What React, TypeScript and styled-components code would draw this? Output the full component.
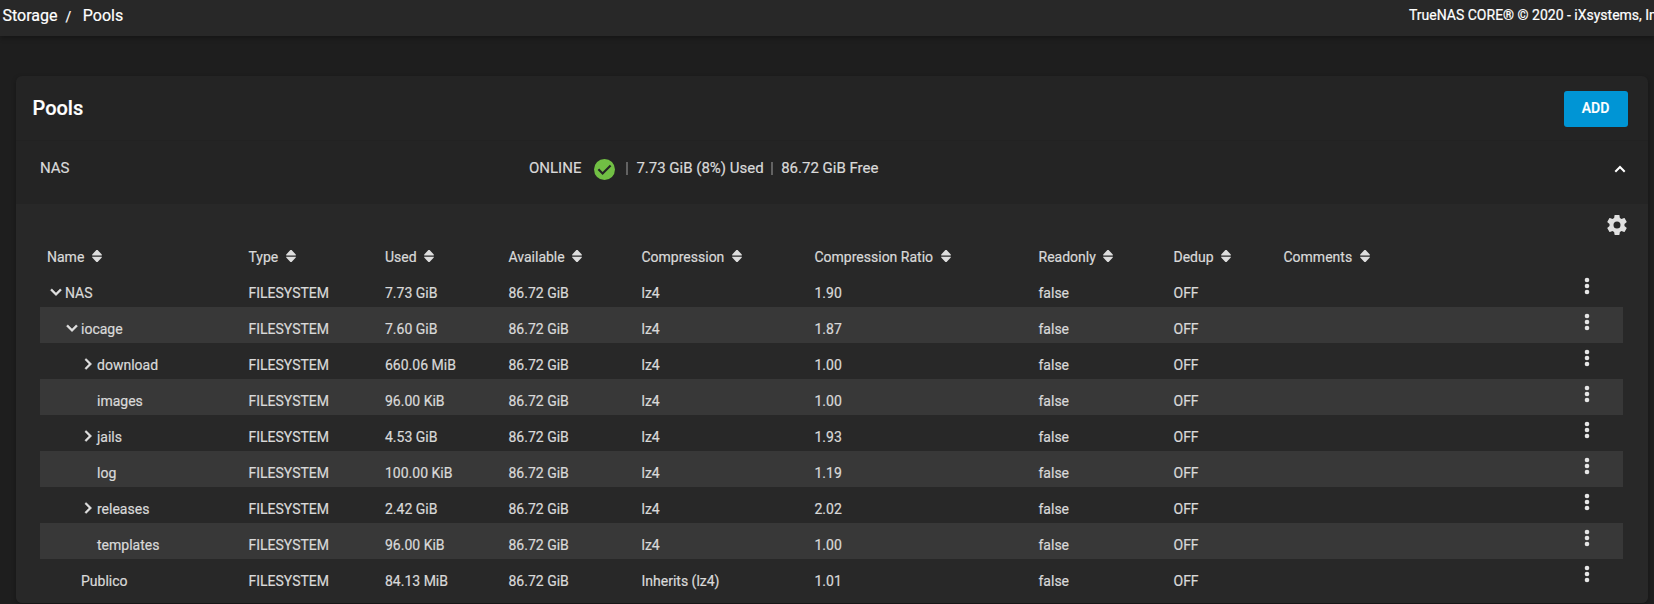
import React from 'react';
import styled, { createGlobalStyle } from 'styled-components';

const Global = createGlobalStyle`
  * { box-sizing: border-box; }
  html, body { margin: 0; background: #1e1e1e; overflow: hidden; }
  body {
    font-family: Roboto, "Liberation Sans", sans-serif;
    font-size: 14px;
    color: #d9d9d9;
    -webkit-text-stroke: 0.2px currentColor;
  }
`;

const Page = styled.div`
  height: 604px;
  overflow: hidden;
  display: flex;
  flex-direction: column;
`;

const Topbar = styled.header`
  flex: none;
  height: 36px;
  padding: 0 0 5px 2.5px;
  display: flex;
  align-items: center;
  background: #282828;
  color: #fff;
  box-shadow: 0 2px 5px rgba(0, 0, 0, 0.3);
`;

const Crumb = styled.span`
  font-size: 16px;
  line-height: 20px;
`;

const Slash = styled.span`
  font-size: 14px;
  margin: 2px 11.5px 0 8px;
`;

const Copyright = styled.span`
  flex: none;
  width: 245px;
  margin-left: auto;
  padding-bottom: 1px;
  font-size: 14px;
  white-space: nowrap;
`;

const Card = styled.main`
  flex: none;
  margin: 40px 6px 0 16px;
  height: 527px;
  border-radius: 6px;
  background: #242424;
  overflow: hidden;
  box-shadow: 0 2px 5px rgba(0, 0, 0, 0.3);
`;

const CardHeader = styled.div`
  height: 64px;
  padding: 1px 20px 0 16.5px;
  display: flex;
  align-items: center;
  justify-content: space-between;
`;

const Title = styled.h1`
  margin: 0;
  padding-bottom: 2px;
  font-size: 20px;
  font-weight: 500;
  color: #fff;
`;

const AddButton = styled.button`
  width: 64px;
  height: 36px;
  padding: 0 1px 2px 0;
  border: 0;
  border-radius: 3px;
  background: #0095d5;
  color: #fff;
  font: 500 14px Roboto, sans-serif;
`;

const PoolSummary = styled.div`
  height: 64px;
  padding: 0 22px 8px 24px;
  border-top: 1px solid #222;
  display: flex;
  align-items: center;
  font-size: 15px;
`;

const PoolName = styled.span`
  width: 489px;
  padding-bottom: 2px;
`;

const Status = styled.div`
  flex: 1;
  display: flex;
  align-items: center;
  white-space: nowrap;
  span { padding-bottom: 2px; }
  svg { margin: 2px 11px 0 13px; }
`;

const Divider = styled.i`
  width: 2px;
  height: 13px;
  margin: 0 8px 0 0;
  background: #626262;
`;

const Panel = styled.section`
  height: 400px;
  padding: 11px 25px 0 24px;
  background: #282828;
`;

const Toolbar = styled.div`
  height: 20px;
  margin-right: -4px;
  display: flex;
  justify-content: flex-end;
`;

const Row = styled.div<{ $striped?: boolean }>`
  height: 36px;
  padding: 8px 27.5px 0 7px;
  display: grid;
  grid-template-columns: 201.5px 136.5px 123.5px 133px 173px 224px 135px 110px 1fr 18px;
  line-height: 28px;
  background: ${p => (p.$striped ? '#383838' : 'transparent')};
`;

const Cell = styled.span`
  white-space: nowrap;
  display: flex;
`;

const Label = styled.span`
  margin-right: 7.5px;
`;

const NameCell = styled(Cell)<{ $level: number }>`
  padding-left: ${p => p.$level * 16}px;
`;

const Toggle = styled.span`
  width: 18px;
  height: 28px;
  display: flex;
  align-items: center;
  justify-content: center;
  svg { flex: none; margin-top: -2px; }
`;

const SortIcon = () => (
  <svg width="10" height="28" viewBox="0 0 10 28" fill="#dedede">
    <path d="M0.2 12.4V11.6L4.4 7H5.6L9.8 11.6V12.4Z M0.2 13.7H9.8V14.5L5.6 19H4.4L0.2 14.5Z" />
  </svg>
);

const Chevron = ({ open }: { open: boolean }) => (
  <svg width="22" height="22" viewBox="0 0 24 24" fill="#e0e0e0" stroke="#e0e0e0" strokeWidth="0.5">
    <path d={open
      ? 'M7.41,8.58L12,13.17L16.59,8.58L18,10L12,16L6,10L7.41,8.58Z'
      : 'M8.59,16.58L13.17,12L8.59,7.41L10,6L16,12L10,18L8.59,16.58Z'} />
  </svg>
);

const MenuButton = styled.button`
  width: 18px;
  height: 20px;
  padding: 0;
  margin-top: -2px;
  border: 0;
  background: none;
  display: flex;
  align-items: flex-start;
  justify-content: center;
`;

const DotsIcon = () => (
  <svg width="6" height="18" viewBox="0 0 6 18" fill="#e6e6e6">
    <circle cx="3" cy="3" r="2.3" /><circle cx="3" cy="9" r="2.3" /><circle cx="3" cy="15" r="2.3" />
  </svg>
);

const columns = ['Name', 'Type', 'Used', 'Available', 'Compression', 'Compression Ratio', 'Readonly', 'Dedup', 'Comments'];

type Dataset = { name: string; level: number; open?: boolean; used: string; compression?: string; ratio: string };
const datasets: Dataset[] = [
  { name: 'NAS', level: 0, open: true, used: '7.73 GiB', ratio: '1.90' },
  { name: 'iocage', level: 1, open: true, used: '7.60 GiB', ratio: '1.87' },
  { name: 'download', level: 2, open: false, used: '660.06 MiB', ratio: '1.00' },
  { name: 'images', level: 2, used: '96.00 KiB', ratio: '1.00' },
  { name: 'jails', level: 2, open: false, used: '4.53 GiB', ratio: '1.93' },
  { name: 'log', level: 2, used: '100.00 KiB', ratio: '1.19' },
  { name: 'releases', level: 2, open: false, used: '2.42 GiB', ratio: '2.02' },
  { name: 'templates', level: 2, used: '96.00 KiB', ratio: '1.00' },
  { name: 'Publico', level: 1, used: '84.13 MiB', compression: 'Inherits (lz4)', ratio: '1.01' },
];

export default function App() {
  return (
    <Page>
      <Global />
      <Topbar>
        <Crumb>Storage</Crumb>
        <Slash>/</Slash>
        <Crumb>Pools</Crumb>
        <Copyright>TrueNAS CORE® © 2020 - iXsystems, Inc.</Copyright>
      </Topbar>
      <Card>
        <CardHeader>
          <Title>Pools</Title>
          <AddButton>ADD</AddButton>
        </CardHeader>
        <PoolSummary>
          <PoolName>NAS</PoolName>
          <Status>
            <span>ONLINE</span>
            <svg width="21" height="21" viewBox="2 2 20 20">
              <circle cx="12" cy="12" r="10" fill="#71bf44" />
              <path d="M6.2 11.8l4 4 7.6-7.6" fill="none" stroke="#242424" strokeWidth="2" />
            </svg>
            <Divider />
            <Label>7.73 GiB (8%) Used</Label>
            <Divider />
            <span>86.72 GiB Free</span>
          </Status>
          <svg width="12" height="8" viewBox="0 0 12 8">
            <path d="M1.3 6.7L6 2l4.7 4.7" fill="none" stroke="#fff" strokeWidth="2" />
          </svg>
        </PoolSummary>
        <Panel>
          <Toolbar>
            <svg width="20" height="20" viewBox="2 2 20 20" fill="#e0e0e0">
              <path d="M12,15.5A3.5,3.5 0 0,1 8.5,12A3.5,3.5 0 0,1 12,8.5A3.5,3.5 0 0,1 15.5,12A3.5,3.5 0 0,1 12,15.5M19.43,12.97C19.47,12.65 19.5,12.33 19.5,12C19.5,11.67 19.47,11.34 19.43,11L21.54,9.37C21.73,9.22 21.78,8.95 21.66,8.73L19.66,5.27C19.54,5.05 19.27,4.96 19.05,5.05L16.56,6.05C16.04,5.66 15.5,5.32 14.87,5.07L14.5,2.42C14.46,2.18 14.25,2 14,2H10C9.75,2 9.54,2.18 9.5,2.42L9.13,5.07C8.5,5.32 7.96,5.66 7.44,6.05L4.95,5.05C4.73,4.96 4.46,5.05 4.34,5.27L2.34,8.73C2.21,8.95 2.27,9.22 2.46,9.37L4.57,11C4.53,11.34 4.5,11.67 4.5,12C4.5,12.33 4.53,12.65 4.57,12.97L2.46,14.63C2.27,14.78 2.21,15.05 2.34,15.27L4.34,18.73C4.46,18.95 4.73,19.03 4.95,18.95L7.44,17.94C7.96,18.34 8.5,18.68 9.13,18.93L9.5,21.58C9.54,21.82 9.75,22 10,22H14C14.25,22 14.46,21.82 14.5,21.58L14.87,18.93C15.5,18.67 16.04,18.34 16.56,17.94L19.05,18.95C19.27,19.03 19.54,18.95 19.66,18.73L21.66,15.27C21.78,15.05 21.73,14.78 21.54,14.63L19.43,12.97Z" />
            </svg>
          </Toolbar>
          <Row>
            {columns.map(c => <Cell key={c}><Label>{c}</Label><SortIcon /></Cell>)}
          </Row>
          {datasets.map((d, i) => (
            <Row key={d.name} $striped={i % 2 === 1}>
              <NameCell $level={d.level}>
                <Toggle>{d.open !== undefined && <Chevron open={d.open} />}</Toggle>
                {d.name}
              </NameCell>
              <Cell>FILESYSTEM</Cell>
              <Cell>{d.used}</Cell>
              <Cell>86.72 GiB</Cell>
              <Cell>{d.compression ?? 'lz4'}</Cell>
              <Cell>{d.ratio}</Cell>
              <Cell>false</Cell>
              <Cell>OFF</Cell>
              <Cell />
              <MenuButton aria-label="Dataset actions"><DotsIcon /></MenuButton>
            </Row>
          ))}
        </Panel>
      </Card>
    </Page>
  );
}
